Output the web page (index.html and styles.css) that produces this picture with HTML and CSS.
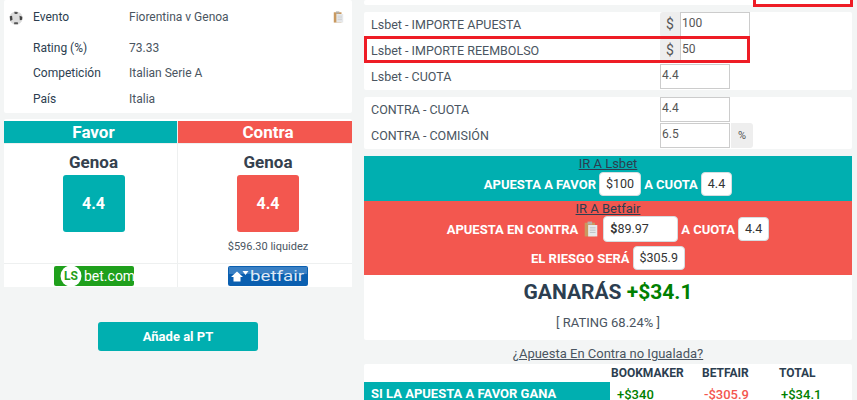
FILE: index.html
```html
<!DOCTYPE html>
<html>
  <head>
    <meta charset="utf-8">
    <title>Calculadora</title>
    <link rel="stylesheet" href="styles.css">
  </head>
  <body>
    <div class="page">
      <div class="left">
        <div class="card info">
          <div class="info-row first">
            <svg class="ball" viewBox="0 0 16 16"><circle cx="8" cy="8" r="7.500" fill="#dcdcdc"/><path d="M6 .8 10 1 9.500 3.500 6.500 3.500Z" fill="#555"/><path d="M.8 6 3.500 5.500 4 10 1.500 11.500Z" fill="#444"/><path d="M12 5.500 15.200 6.500 15 10 12.400 10.500Z" fill="#444"/><path d="M6 12.800h4l.4 2.400-4.600 0Z" fill="#555"/></svg>
            <span class="info-label">Evento</span>
            <span class="info-value">Fiorentina v Genoa</span>
            <svg class="clip" viewBox="0 0 12 14"><rect x="0.500" y="1.500" width="9" height="12" fill="#c9995f"/><rect x="3" y="0.500" width="4" height="2.500" fill="#b5b0a8"/><rect x="3.500" y="3.500" width="8" height="10" fill="#e6e8ea"/><path d="M5 6h5M5 8h5M5 10h5" stroke="#c2c6ca" stroke-width=".7"/></svg>
          </div>
          <div class="info-row"><span class="info-label">Rating (%)</span><span class="info-value">73.33</span></div>
          <div class="info-row"><span class="info-label">Competición</span><span class="info-value">Italian Serie A</span></div>
          <div class="info-row"><span class="info-label">País</span><span class="info-value">Italia</span></div>
        </div>

        <div class="card odds">
          <div class="odds-col col-favor">
            <div class="odds-head">Favor</div>
            <div class="odds-body">
              <div class="team">Genoa</div>
              <div class="price">4.4</div>
            </div>
            <div class="odds-logo">
              <svg class="logo" viewBox="0 0 80 20"><rect width="80" height="20" rx="2" fill="#1fa01c"/><circle cx="17" cy="10" r="10.500" fill="#fff"/><text x="17" y="14" text-anchor="middle" class="logo-ls">LS</text><text x="30" y="15" class="logo-bet">bet.com</text></svg>
            </div>
          </div>
          <div class="odds-col col-contra">
            <div class="odds-head">Contra</div>
            <div class="odds-body">
              <div class="team">Genoa</div>
              <div class="price">4.4</div>
              <div class="liquidity">$596.30 liquidez</div>
            </div>
            <div class="odds-logo">
              <svg class="logo" viewBox="0 0 80 20"><rect width="80" height="20" rx="2" fill="#0a5fb0"/><rect x="1" y="1" width="78" height="7" fill="#3a80c4"/><path d="M3 11 9 5.500 15 11h-2.500v4.500h-7V11Z" fill="#fff"/><path d="M14.500 5h6l-3 4Z" fill="#fff"/><text x="22" y="15" textLength="54" lengthAdjust="spacingAndGlyphs" class="logo-betfair">betfair</text></svg>
            </div>
          </div>
        </div>

        <div class="add-wrap"><a class="add-btn">Añade al PT</a></div>
      </div>

      <div class="right">
        <div class="card top-stub"></div>
        <div class="top-marker"></div>

        <div class="card form">
          <div class="form-row">
            <span class="form-label">Lsbet - IMPORTE APUESTA</span>
            <span class="addon addon-left">$</span><span class="field">100</span>
          </div>
          <div class="form-row">
            <span class="form-label">Lsbet - IMPORTE REEMBOLSO</span>
            <span class="addon addon-left">$</span><span class="field">50</span>
            <div class="marker"></div>
          </div>
          <div class="form-row">
            <span class="form-label">Lsbet - CUOTA</span>
            <span class="field plain">4.4</span>
          </div>
        </div>

        <div class="card form">
          <div class="form-row">
            <span class="form-label">CONTRA - CUOTA</span>
            <span class="field plain">4.4</span>
          </div>
          <div class="form-row">
            <span class="form-label">CONTRA - COMISIÓN</span>
            <span class="field plain">6.5</span><span class="addon addon-right">%</span>
          </div>
        </div>

        <div class="card result">
          <div class="band band-favor">
            <a class="band-link">IR A Lsbet</a>
            <div class="band-line">APUESTA A FAVOR <span class="chip">$100</span> A CUOTA <span class="chip">4.4</span></div>
          </div>
          <div class="band band-contra">
            <a class="band-link">IR A Betfair</a>
            <div class="band-line">APUESTA EN CONTRA
              <svg class="clip-band" viewBox="0 0 12 14"><rect x="0.500" y="1.500" width="9" height="12" fill="#c9995f"/><rect x="3" y="0.500" width="4" height="2.500" fill="#b5b0a8"/><rect x="3.500" y="3.500" width="8" height="10" fill="#e6e8ea"/><path d="M5 6h5M5 8h5M5 10h5" stroke="#b4b8bc" stroke-width=".7"/></svg>
              <span class="chip chip-input"><b>$</b>89.97</span> A CUOTA <span class="chip">4.4</span></div>
            <div class="band-line risk">EL RIESGO SERÁ <span class="chip">$305.9</span></div>
          </div>
          <div class="profit">GANARÁS <span class="green">+$34.1</span></div>
          <div class="rating">[ RATING 68.24% ]</div>
        </div>

        <div class="unmatched"><a>¿Apuesta En Contra no Igualada?</a></div>

        <div class="card outcomes">
          <div class="out-head">
            <span class="out-title"></span>
            <span class="out-a">BOOKMAKER</span><span class="out-b">BETFAIR</span><span class="out-c">TOTAL</span>
          </div>
          <div class="out-row">
            <span class="out-title teal">SI LA APUESTA A FAVOR GANA</span>
            <span class="out-a val green">+$340</span><span class="out-b val red">-$305.9</span><span class="out-c val green">+$34.1</span>
          </div>
        </div>
      </div>
    </div>
  </body>
</html>
```

FILE: styles.css
```css
html, body {
  margin: 0;
  height: 400px;
  overflow: hidden;
}
body {
  background-color: #f3f5f5;
  color: #2c3e50;
  font-family: Roboto, "Liberation Sans", Arial, sans-serif;
  font-size: 12px;
}
a {
  color: #2c3e50;
  text-decoration: underline;
}
.page {
  display: flex;
  gap: 12px;
  padding: 0 5px 0 4px;
}
.left {
  width: 348px;
  flex: none;
}
.right {
  flex: 1;
  position: relative;
}
.card {
  background-color: #fff;
  border-radius: 2px;
}

/* event info */
.info {
  height: 113px;
}
.info-row {
  display: flex;
  align-items: center;
  height: 25.5px;
  padding-left: 29px;
  color: #4a5561;
}
.info-row.first {
  position: relative;
  height: 33px;
  margin-bottom: 2px;
}
.info-label {
  width: 96px;
  color: #2c3e50;
}
.ball {
  position: absolute;
  left: 5px;
  top: 11px;
  width: 14px;
  height: 14px;
}
.clip {
  position: absolute;
  right: 8px;
  top: 11px;
  width: 11px;
  height: 12px;
}

/* favor / contra */
.odds {
  display: flex;
  margin-top: 6px;
  padding-top: 2px;
  height: 166px;
  gap: 1px;
}
.odds-col {
  flex: 1;
  display: flex;
  flex-direction: column;
  background-color: #fff;
}
.col-favor {
  flex: 0 0 173px;
  position: relative;
}
.col-favor::after {
  content: "";
  position: absolute;
  right: -1px;
  top: 0;
  bottom: 0;
  width: 1px;
  background-color: #eef0f0;
}
.odds-head {
  height: 22px;
  line-height: 22px;
  padding-left: 6px;
  color: #fff;
  font-size: 17px;
  font-weight: bold;
  text-align: center;
  border-bottom: 1px solid #eef0f0;
}
.col-favor .odds-head, .col-favor .price {
  background-color: #00afb0;
}
.col-contra .odds-head, .col-contra .price {
  background-color: #f3574f;
}
.odds-body {
  height: 119px;
  padding-left: 6px;
  text-align: center;
  border-bottom: 1px solid #eef0f0;
}
.team {
  padding-top: 7px;
  font-size: 17px;
  font-weight: bold;
  line-height: 22px;
  color: #35414e;
}
.price {
  width: 62px;
  height: 57px;
  margin: 2px auto 0;
  border-radius: 3px;
  line-height: 57px;
  color: #fff;
  font-size: 16px;
  font-weight: bold;
}
.liquidity {
  margin-top: 8px;
  font-size: 11px;
  line-height: 14px;
  color: #4a5561;
}
.odds-logo {
  flex: 1;
  text-align: center;
  padding: 2px 0 0 6px;
  overflow: hidden;
}
.logo {
  width: 80px;
  height: 20px;
  display: inline-block;
  vertical-align: top;
}
.logo-ls {
  font-size: 12px;
  font-weight: bold;
  fill: #1fa01c;
}
.logo-bet {
  font-size: 14px;
  fill: #fff;
}
.logo-betfair {
  font-size: 15px;
  fill: #dfe9f5;
}
.add-wrap {
  margin-top: 35px;
  text-align: center;
}
.add-btn {
  display: inline-block;
  width: 160px;
  height: 29px;
  line-height: 29px;
  border-radius: 3px;
  background-color: #00afb0;
  color: #fff;
  font-size: 13px;
  font-weight: bold;
  text-decoration: none;
}

/* right column */
.top-stub {
  height: 5px;
}
.top-marker {
  position: absolute;
  right: -1px;
  top: -4px;
  box-sizing: border-box;
  width: 100px;
  height: 11px;
  border: 3px solid #ee1c25;
}
.form {
  margin-top: 7px;
  padding-left: 7px;
}
.form-row {
  position: relative;
  display: flex;
  align-items: flex-start;
  height: 26px;
}
.form-label {
  width: 289px;
  line-height: 25px;
  color: #4a5561;
  font-size: 12.500px;
}
.field {
  box-sizing: border-box;
  width: 70px;
  height: 25px;
  line-height: 21px;
  padding-left: 1px;
  border: 1px solid #ccc;
  color: #555;
  background-color: #fff;
}
.addon {
  box-sizing: border-box;
  height: 25px;
  line-height: 25px;
  background-color: #eee;
  color: #555;
  text-align: center;
}
.addon-left {
  width: 20px;
  font-size: 14px;
  border-radius: 3px 0 0 3px;
}
.addon-right {
  width: 22px;
  margin-left: 1px;
  border-radius: 0 3px 3px 0;
  font-size: 11px;
}
.marker {
  position: absolute;
  left: -7px;
  top: -2px;
  box-sizing: border-box;
  width: 386px;
  height: 27px;
  border: 3px solid #ee1c25;
}

/* result */
.result {
  margin-top: 7px;
  height: 184px;
}
.band {
  text-align: center;
  color: #fff;
  font-size: 13px;
  font-weight: bold;
}
.band-favor {
  height: 45px;
  background-color: #00afb0;
}
.band-contra {
  height: 74px;
  background-color: #f3574f;
}
.band-link {
  display: block;
  font-weight: normal;
  line-height: 16px;
}
.band-contra .band-link {
  line-height: 15px;
}
.band-line {
  display: flex;
  align-items: center;
  justify-content: center;
  gap: 3px;
}
.risk {
  margin-top: 4px;
}
.chip {
  display: inline-block;
  box-sizing: border-box;
  height: 24px;
  line-height: 22px;
  padding: 0 6px;
  background-color: #fff;
  border: 1px solid #d5dde0;
  border-radius: 4px;
  color: #333;
  font-size: 12.500px;
  font-weight: normal;
}
.chip-input {
  width: 75px;
  height: 26px;
  line-height: 24px;
  text-align: left;
}
.clip-band {
  width: 14px;
  height: 16px;
  margin: 0 2px 0 3px;
}
.profit {
  margin-top: 4px;
  text-align: center;
  font-size: 21px;
  font-weight: bold;
  line-height: 26px;
}
.green {
  color: #008000;
}
.red {
  color: #f3574f;
}
.rating {
  margin-top: 10px;
  line-height: 15px;
  font-size: 13px;
  text-align: center;
  color: #4a5561;
}
.unmatched {
  margin-top: 6px;
  text-align: center;
  font-size: 13px;
  line-height: 16px;
}
.unmatched a {
  color: #4a5561;
}
.outcomes {
  margin-top: 2px;
}
.out-head, .out-row {
  display: flex;
  align-items: center;
  font-weight: bold;
}
.out-head {
  height: 18px;
}
.out-row {
  height: 24px;
}
.out-title {
  box-sizing: border-box;
  width: 246px;
  padding-left: 7px;
}
.teal {
  line-height: 24px;
  background-color: #00afb0;
  color: #fff;
  font-size: 13px;
}
.out-a {
  width: 87px;
  padding-left: 1px;
}
.out-b {
  width: 73px;
  padding-left: 4px;
}
.out-c {
  width: 70px;
  padding-left: 4px;
}
.val {
  font-size: 13px;
  font-weight: 500;
}
.out-a.val {
  padding-left: 7px;
  width: 81px;
}
.out-b.val {
  padding-left: 6px;
  width: 71px;
}
.out-c.val {
  padding-left: 6px;
  width: 68px;
}
```
